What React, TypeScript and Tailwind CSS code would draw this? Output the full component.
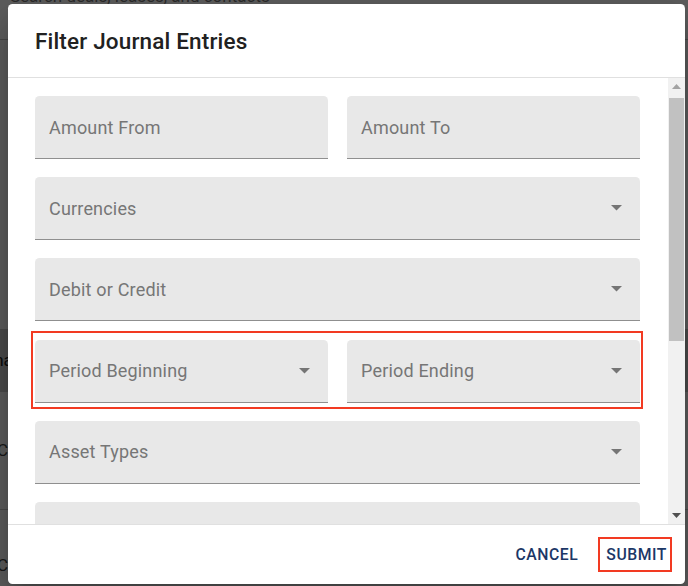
import React from "react";

function Caret({ className = "" }: { className?: string }) {
  return (
    <svg width="11" height="6" viewBox="0 0 11 6" className={className}>
      <path d="M0 0 L11 0 L5.5 5.6 Z" fill="#757575" />
    </svg>
  );
}

function Field({ label, select = false }: { label: string; select?: boolean }) {
  return (
    <div className="flex-1 h-[63px] bg-[#e8e8e8] rounded-t-[4.5px] border-b border-[#8f8f8f] flex items-center pl-[14px] pr-[18px]">
      <span className="flex-1 text-[18px] leading-[24px] text-[#767676] tracking-[0.01em] pt-[1px]">{label}</span>
      {select && <Caret />}
    </div>
  );
}

export default function App() {
  return (
    <div className="relative w-[688px] h-[586px] overflow-hidden bg-white font-[Roboto,'Liberation_Sans',sans-serif]">
      {/* background page */}
      <div className="flex flex-col w-full h-full text-[#333]">
        <div className="h-[40px] border-b border-[#c4c4c4] pl-[10px]">
          <div className="-mt-[13px] text-[17px] leading-[18px] text-[#777]">Search deals, leases, and contacts</div>
        </div>
        <div className="h-[52px]" />
        <div className="-ml-[60px] text-[17px] leading-[24px] text-[#555]">Filter</div>
        <div className="h-[34px]" />
        <div className="-ml-[88px] text-[26px] leading-[32px] text-[#222]">Journ</div>
        <div className="h-[148px] border-b border-[#ccc]" />
        <div className="h-[62px] bg-[#d2d2d2] flex items-center -ml-[40px] text-[17px] text-[#222]">Journal</div>
        <div className="h-[118px] border-b border-[#ccc] flex items-center -ml-[14px] text-[17px] text-[#444]">CC</div>
        <div className="h-[68px] flex items-end -ml-[14px] text-[17px] text-[#444]">CC</div>
      </div>
      {/* backdrop */}
      <div className="absolute inset-0 bg-black/[0.63]" />
      {/* dialog */}
      <div className="absolute left-[8px] top-[4px] w-[677px] h-[580px] bg-white rounded-[4.5px] shadow-[0_11px_15px_-7px_rgba(0,0,0,0.2),0_24px_38px_3px_rgba(0,0,0,0.14),0_9px_46px_8px_rgba(0,0,0,0.12)] flex flex-col overflow-hidden">
        <div className="h-[73px] shrink-0 flex items-center pl-[27px]">
          <h2 className="text-[22.5px] leading-[32px] font-medium text-[#212121] tracking-[0.0075em]">Filter Journal Entries</h2>
        </div>
        <div className="flex-1 flex border-y border-[#e0e0e0] min-h-0">
          <div className="flex-1 overflow-hidden pl-[27px] pr-[28px] pt-[18px] flex flex-col gap-[18.2px]">
            <div className="flex gap-[19px] shrink-0">
              <Field label="Amount From" />
              <Field label="Amount To" />
            </div>
            <div className="flex shrink-0">
              <Field label="Currencies" select />
            </div>
            <div className="flex shrink-0">
              <Field label="Debit or Credit" select />
            </div>
            <div className="relative flex gap-[19px] shrink-0">
              <Field label="Period Beginning" select />
              <Field label="Period Ending" select />
              <div className="absolute -left-[4px] -right-[3px] -top-[9px] -bottom-[6px] border-2 border-[#f23a22] pointer-events-none" />
            </div>
            <div className="flex shrink-0">
              <Field label="Asset Types" select />
            </div>
            <div className="flex shrink-0">
              <Field label="" />
            </div>
          </div>
          {/* scrollbar */}
          <div className="w-[17px] shrink-0 bg-[#f1f1f1] flex flex-col">
            <div className="h-[17px] flex items-center justify-center">
              <svg width="9" height="5" viewBox="0 0 9 5"><path d="M0 5 L9 5 L4.5 0 Z" fill="#a3a3a3" /></svg>
            </div>
            <div className="h-[3px]" />
            <div className="h-[243px] mx-[1px] bg-[#c1c1c1]" />
            <div className="flex-1" />
            <div className="h-[17px] flex items-center justify-center">
              <svg width="9" height="5" viewBox="0 0 9 5"><path d="M0 0 L9 0 L4.5 5 Z" fill="#505050" /></svg>
            </div>
          </div>
        </div>
        <div className="h-[59px] shrink-0 flex items-center justify-end pr-[13px] gap-[12px]">
          <button className="h-[35px] px-[8px] text-[15.75px] font-medium tracking-[0.035em] text-[#1c3766] uppercase">Cancel</button>
          <button className="h-[35px] pl-[6px] pr-[3px] border-2 border-[#f23a22] text-[15.75px] font-medium tracking-[0.035em] text-[#1c3766] uppercase">Submit</button>
        </div>
      </div>
    </div>
  );
}
